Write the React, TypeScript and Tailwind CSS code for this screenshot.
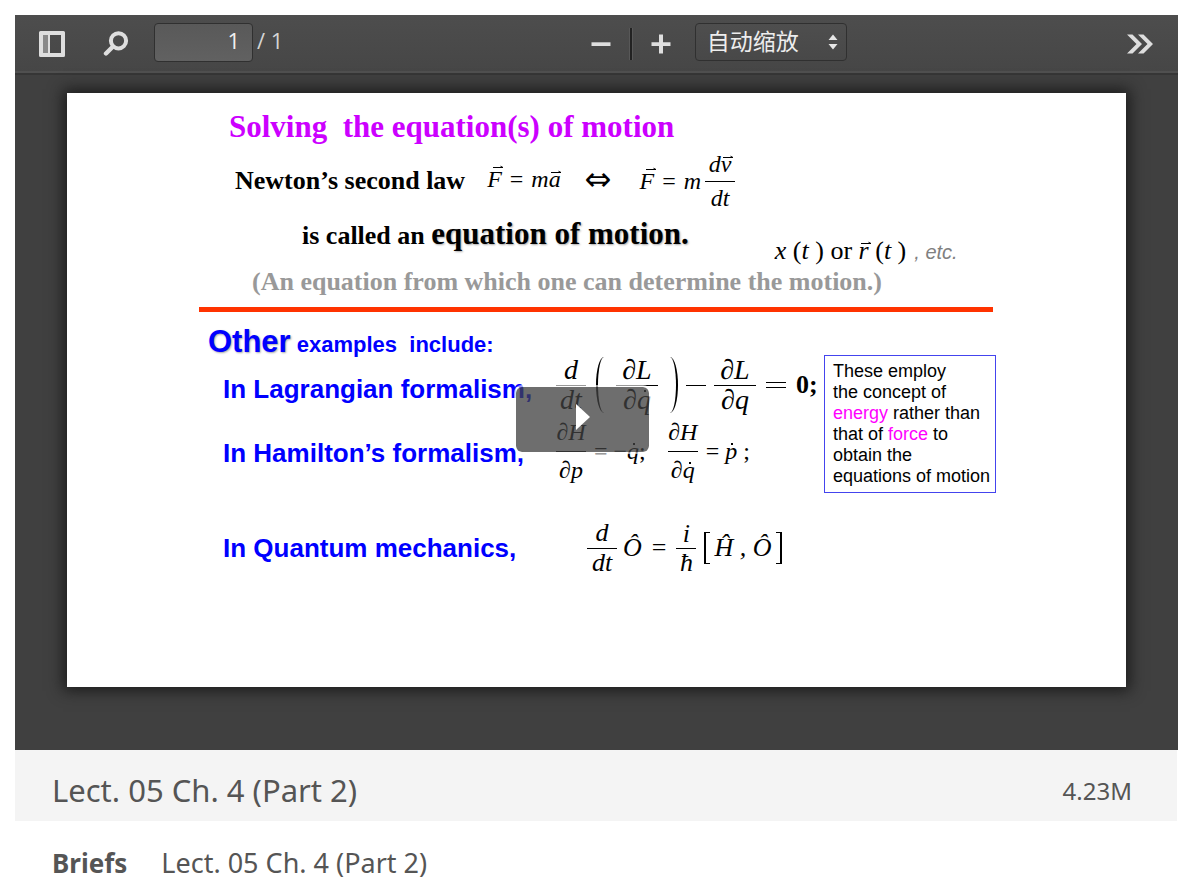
import type { ReactNode } from "react";

function Vec({ children, low = false }: { children: ReactNode; low?: boolean }) {
  return (
    <span className="relative inline-block leading-none">
      {children}
      <svg viewBox="0 0 10 4" className={low ? "absolute left-[2px] top-[3px] h-1 w-[10px]" : "absolute left-[6px] -top-[2px] h-1 w-[10px]"} aria-hidden="true">
        <path d="M0 2.5H10M7.5 1.2L10 2.5" fill="none" stroke="currentColor" strokeWidth="1" />
      </svg>
    </span>
  );
}

function Dot({ children }: { children: ReactNode }) {
  return (
    <span className="relative inline-block leading-none">
      {children}
      <span className="absolute left-1/2 top-1 size-[2px] bg-current" />
    </span>
  );
}

function Frac({ top, bottom, wide = false }: { top: ReactNode; bottom: ReactNode; wide?: boolean }) {
  return (
    <span className={wide ? "flex w-[42px] shrink-0 flex-col text-center" : "flex w-[30px] shrink-0 flex-col text-center"}>
      <span className="block border-b border-black pb-px whitespace-nowrap">{top}</span>
      <span className="block whitespace-nowrap">{bottom}</span>
    </span>
  );
}

function Toolbar() {
  return (
    <header className="flex h-[60px] items-center border-b-2 border-[#363636] bg-linear-to-b from-[#4d4d4d] to-[#464646] pr-6 pl-[22px] font-['Open_Sans','Noto_Sans_CJK_SC',sans-serif] text-[22px] text-[#e4e4e4] shadow-[inset_0_-2px_0_#505050]">
      <button type="button" aria-label="Toggle sidebar" className="flex w-[30px] justify-center">
        <svg viewBox="0 0 28 28" className="size-7" aria-hidden="true">
          <path fillRule="evenodd" d="M2.5 1H25.5Q27 1 27 2.5V25.5Q27 27 25.5 27H2.5Q1 27 1 25.5V2.5Q1 1 2.5 1ZM5 5V23H23V5Z" fill="#dedede" />
          <path d="M5 5H10V23H5Z" fill="#898989" />
          <path d="M10 4H12V24H10Z" fill="#dedede" />
        </svg>
      </button>
      <button type="button" aria-label="Find" className="ml-9 flex w-[26px] justify-center">
        <svg viewBox="0 0 26 26" className="size-[26px]" aria-hidden="true">
          <circle cx="15.5" cy="9.8" r="7.6" fill="none" stroke="#dedede" strokeWidth="4" />
          <path d="M10 15.5L3 22.5" stroke="#dedede" strokeWidth="4.4" strokeLinecap="round" />
        </svg>
      </button>
      <label className="mb-1 ml-[25px] flex items-center gap-1">
        <input aria-label="Page" defaultValue="1" className="h-[39px] w-[99px] rounded-sm border border-[#303030] bg-linear-to-b from-[#595959] to-[#616161] pr-3 pb-1 text-right text-[#f0f0f0] outline-none" />
        <span className="pb-1 whitespace-nowrap text-[#d4d4d4]">/ 1</span>
      </label>
      <div className="flex-[11]" />
      <button type="button" aria-label="Zoom out" className="flex w-5 justify-center">
        <svg viewBox="0 0 20 20" className="size-5" aria-hidden="true"><path d="M0.5 8.3H19.5V12H0.5Z" fill="#dedede" /></svg>
      </button>
      <span className="mx-[18px] h-8 w-1 border-x border-[#585858] bg-[#222]" />
      <button type="button" aria-label="Zoom in" className="flex w-5 justify-center">
        <svg viewBox="0 0 20 20" className="size-5" aria-hidden="true"><path d="M8 0.5H12V8.3H19.5V12H12V19.5H8V12H0.5V8.3H8Z" fill="#dedede" /></svg>
      </button>
      <div className="relative mb-1 ml-6">
        <select aria-label="Zoom" className="h-[38px] w-[152px] appearance-none rounded-sm border border-[#303030] bg-linear-to-b from-[#4e4e4e] to-[#484848] pl-[11px] pb-1 font-['Noto_Sans_CJK_SC',sans-serif] text-[23px] leading-8 text-[#ededed] outline-none">
          <option>自动缩放</option>
        </select>
        <svg viewBox="0 0 10 16" className="pointer-events-none absolute top-[11px] right-[9px] h-4 w-[10px]" aria-hidden="true">
          <path d="M5 0.5L9.5 6H0.5ZM5 15.5L0.5 10H9.5Z" fill="#e6e6e6" />
        </svg>
      </div>
      <div className="flex-[10]" />
      <button type="button" aria-label="Tools" className="flex w-[28px] justify-center">
        <svg viewBox="0 0 28 20" className="h-5 w-7" aria-hidden="true">
          <path d="M1 0.5H6.5L16 10L6.5 19.5H1L10.5 10ZM12 0.5H17.5L27 10L17.5 19.5H12L21.5 10Z" fill="#dedede" />
        </svg>
      </button>
    </header>
  );
}

function Slide() {
  return (
    <section className="relative mx-[52px] mt-[18px] h-[594px] bg-white pt-4 pl-[132px] font-['Liberation_Serif',serif] text-2xl text-black shadow-[0_0_14px_4px_#1c1c1c]">
      <h1 className="pl-[30px] text-[31px] leading-9 font-bold whitespace-pre text-[#cc00ff]">Solving  the equation(s) of motion</h1>
      <div className="mt-[5px] flex h-[62px] items-center pl-9 leading-8 whitespace-nowrap">
        <strong className="text-[26px]">Newton’s second law</strong>
        <span className="ml-[22px] flex items-center gap-2 pb-1 italic">
          <Vec>F</Vec>
          <span className="not-italic">=</span>
          <span>m<Vec low>a</Vec></span>
        </span>
        <span className="ml-6 pb-1 font-['DejaVu_Sans',sans-serif] text-[32px]">⇔</span>
        <span className="ml-7 flex items-center gap-2 italic">
          <Vec>F</Vec>
          <span className="not-italic">=</span>
          <span className="flex items-center gap-1">m<Frac top={<>d<Vec low>v</Vec></>} bottom="dt" /></span>
        </span>
      </div>
      <div className="mt-1 flex h-[50px] pl-[103px] whitespace-nowrap">
        <p className="text-[26px] leading-9 font-bold">is called an <span className="text-[31px] text-shadow-[1px_1px_2px_#aaa]">equation of motion.</span></p>
        <p className="ml-[86px] self-end text-[26px] leading-7"><i>x</i> (<i>t</i> ) or <i><Vec low>r</Vec></i> (<i>t</i> )<span className="ml-2 font-['Liberation_Sans',sans-serif] text-xl text-[#808080] italic">, etc.</span></p>
      </div>
      <p className="pl-[53px] text-[26px] leading-8 font-bold text-[#999]">(An equation from which one can determine the motion.)</p>
      <hr className="mt-[9px] w-[794px] border-0 border-t-5 border-[#ff3300]" />
      <h2 className="mt-4 h-7 pl-[9px] font-['Liberation_Sans',sans-serif] text-[22px] leading-7 font-bold whitespace-pre text-[#0000ff]"><span className="text-[31px] text-shadow-[1px_1px_2px_#aaa]">Other</span> examples  include:</h2>
      <div className="flex w-[797px] items-start">
        <div className="flex-1">
          <div className="flex h-[58px] items-center pl-6">
            <h3 className="w-[333px] shrink-0 pt-2 font-['Liberation_Sans',sans-serif] text-[26px] font-bold whitespace-nowrap text-[#0000ff]">In Lagrangian formalism,</h3>
            <div className="flex items-center text-[28px] leading-7 italic">
              <Frac top="d" bottom="dt" />
              <span className="mr-1 ml-[10px] h-14 w-4 rounded-l-[100%] border-l-2 border-black" />
              <Frac wide top="∂L" bottom={<>∂<Dot>q</Dot></>} />
              <span className="ml-1 h-14 w-4 rounded-r-[100%] border-r-2 border-black" />
              <span className="mx-2 h-px w-5 bg-black" />
              <Frac wide top="∂L" bottom="∂q" />
              <span className="ml-[10px] flex w-5 flex-col gap-1"><span className="h-px bg-black" /><span className="h-px bg-black" /></span>
              <span className="ml-[10px] text-[26px] font-bold not-italic">0;</span>
            </div>
          </div>
          <div className="mt-[6px] flex h-[62px] items-center pl-6">
            <h3 className="w-[333px] shrink-0 pt-1 font-['Liberation_Sans',sans-serif] text-[26px] font-bold whitespace-nowrap text-[#0000ff]">In Hamilton’s formalism,</h3>
            <div className="flex items-center text-2xl leading-9 italic">
              <Frac top="∂H" bottom="∂p" />
              <span className="ml-2 whitespace-nowrap not-italic">= −<i><Dot>q</Dot></i>;</span>
              <span className="ml-[22px] flex"><Frac top="∂H" bottom={<>∂<Dot>q</Dot></>} /></span>
              <span className="ml-2 whitespace-nowrap not-italic">= <i><Dot>p</Dot></i> ;</span>
            </div>
          </div>
        </div>
        <p className="-mt-px w-[172px] shrink-0 border border-[#4444ee] py-[5px] pl-2 font-['Liberation_Sans',sans-serif] text-[18px] leading-[21px] whitespace-nowrap">
          These employ<br />the concept of<br /><span className="text-[#ff00ff]">energy</span> rather than<br />that of <span className="text-[#ff00ff]">force</span> to<br />obtain the<br />equations of motion
        </p>
      </div>
      <div className="mt-7 flex h-[54px] items-center pl-6">
        <h3 className="w-[364px] shrink-0 font-['Liberation_Sans',sans-serif] text-[26px] font-bold whitespace-nowrap text-[#0000ff]">In Quantum mechanics,</h3>
        <div className="flex items-center text-[26px] leading-7 italic">
          <Frac top="d" bottom="dt" />
          <span className="ml-[6px]">Ô</span>
          <span className="mx-[10px] not-italic">=</span>
          <span className="flex w-5 flex-col text-center"><span className="border-b border-black">i</span><span>ħ</span></span>
          <span className="mr-1 ml-2 h-8 w-[6px] border-y border-l-2 border-black" />
          <span className="whitespace-nowrap">Ĥ , Ô</span>
          <span className="ml-1 h-8 w-[6px] border-y border-r-2 border-black" />
        </div>
      </div>
      <button type="button" aria-label="Play" className="absolute top-[292px] left-[447px] flex h-[69px] w-[137px] items-center justify-center rounded-lg border-2 border-white/60 bg-[#414141]/76 bg-clip-padding pb-[6px]">
        <svg viewBox="0 0 14 26" className="h-[26px] w-[14px]" aria-hidden="true"><path d="M0 0L14 13L0 26Z" fill="#fff" /></svg>
      </button>
    </section>
  );
}

export default function App() {
  return (
    <main className="bg-white pt-[15px] pr-3 pl-[15px] font-['Noto_Sans',sans-serif] text-[#555]">
      <div className="h-[735px] bg-[#404040]">
        <Toolbar />
        <Slide />
      </div>
      <div className="mr-px flex h-[71px] items-center justify-between bg-[#f4f4f4] pt-2.5 pr-[45px] pl-[37px]">
        <h2 className="text-[31px]">Lect. 05 Ch. 4 (Part 2)</h2>
        <span className="text-2xl">4.23M</span>
      </div>
      <dl className="flex h-[70px] items-center gap-[34px] pt-[14px] pl-[37px] text-[26px]">
        <dt className="font-bold">Briefs</dt>
        <dd className="text-[27px]">Lect. 05 Ch. 4 (Part 2)</dd>
      </dl>
    </main>
  );
}
